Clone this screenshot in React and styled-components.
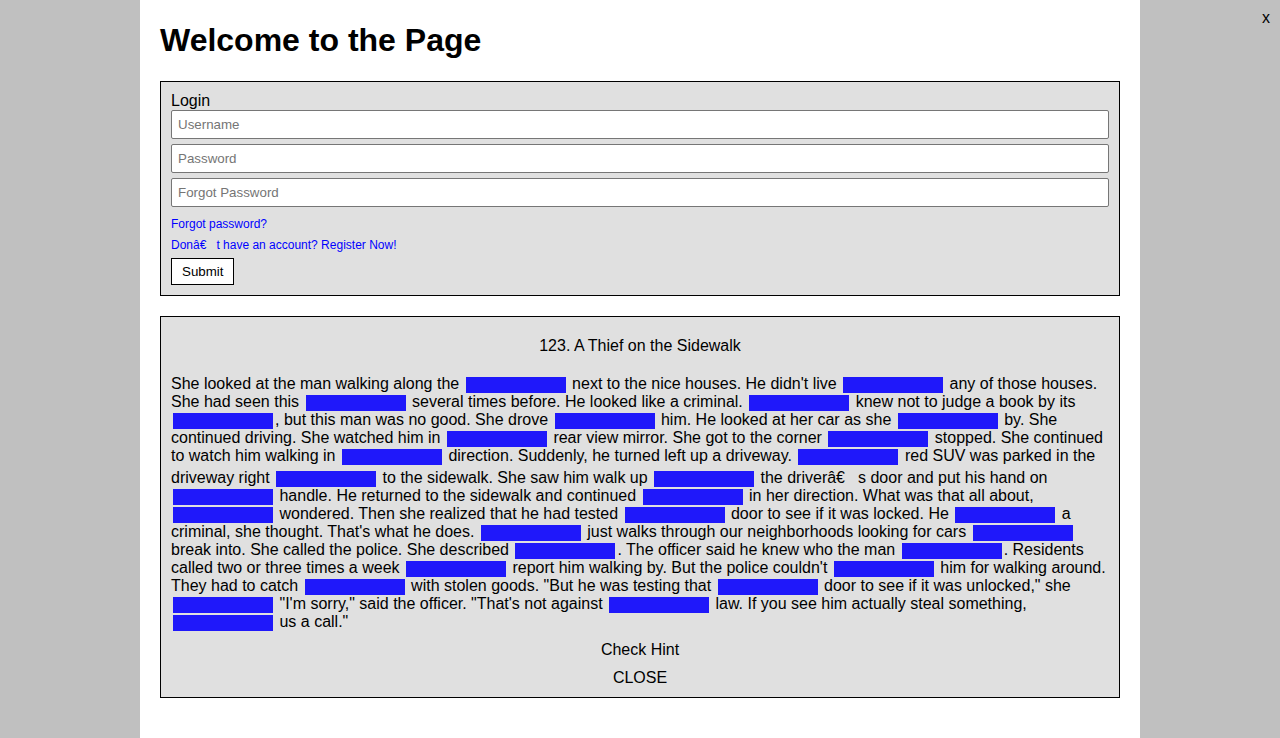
import React from "react";
import styled, { createGlobalStyle } from "styled-components";

const GlobalStyle = createGlobalStyle`
  body {
    margin: 0;
    background: #c0c0c0;
    font-family: "Liberation Sans", Arial, Helvetica, sans-serif;
    color: #000;
  }
`;

const story = [
  "She looked at the man walking along the ___ next to the nice houses. He didn't live ___ any of those houses. She had seen this ___ several times before. He looked like a criminal. ___ knew not to judge a book by its ___, but this man was no good. She drove ___ him. He looked at her car as she ___ by. She continued driving. She watched him in ___ rear view mirror. She got to the corner ___ stopped. She continued to watch him walking in ___ direction. Suddenly, he turned left up a driveway. ___ red SUV was parked in the driveway right ___ to the sidewalk. She saw him walk up ___ the driver\u00e2\u20ac",
  "s door and put his hand on ___ handle. He returned to the sidewalk and continued ___ in her direction. What was that all about, ___ wondered. Then she realized that he had tested ___ door to see if it was locked. He ___ a criminal, she thought. That's what he does. ___ just walks through our neighborhoods looking for cars ___ break into. She called the police. She described ___. The officer said he knew who the man ___. Residents called two or three times a week ___ report him walking by. But the police couldn't ___ him for walking around. They had to catch ___ with stolen goods. \"But he was testing that ___ door to see if it was unlocked,\" she ___ \"I'm sorry,\" said the officer. \"That's not against ___ law. If you see him actually steal something, ___ us a call.\"",
];

function withBlanks(text, keyBase) {
  const parts = text.split("___");
  return parts.map((part, i) => (
    <React.Fragment key={keyBase + i}>
      {part}
      {i < parts.length - 1 && <Blank />}
    </React.Fragment>
  ));
}

function App() {
  return (
    <>
      <GlobalStyle />
      <CloseX>x</CloseX>
      <Panel>
        <Heading>Welcome to the Page</Heading>

        <Box>
          <Label>Login</Label>
          <Field placeholder="Username" />
          <Field placeholder="Password" type="password" />
          <Field placeholder="Forgot Password" />
          <Links>
            <SmallLink href="#">Forgot password?</SmallLink>
            <SmallLink href="#">Don{"\u00e2\u20ac\u0099"}t have an account? Register Now!</SmallLink>
          </Links>
          <SubmitButton>Submit</SubmitButton>
        </Box>

        <Box $gap>
          <StoryTitle>123. A Thief on the Sidewalk</StoryTitle>
          <StoryText>
            {withBlanks(story[0], "a")}
            <Garbled>{"\u0099"}</Garbled>
            {withBlanks(story[1], "b")}
          </StoryText>
          <Action>Check Hint</Action>
          <Action>CLOSE</Action>
        </Box>
      </Panel>
    </>
  );
}

const CloseX = styled.div`
  position: absolute;
  top: 9px;
  right: 10px;
  font-size: 16px;
`;

const Panel = styled.div`
  width: 1000px;
  min-height: 100vh;
  margin: 0 auto;
  padding: 1px 20px 20px;
  box-sizing: border-box;
  background: #fff;
`;

const Heading = styled.h1`
  font-size: 32px;
  font-weight: bold;
  margin: 21px 0 22px;
`;

const Box = styled.div`
  border: 1px solid #000;
  background: #e0e0e0;
  padding: 10px;
  margin-top: ${(p) => (p.$gap ? "20px" : "0")};
`;

const Label = styled.div`
  font-size: 16px;
  line-height: 18px;
`;

const Field = styled.input`
  display: block;
  width: 100%;
  height: 29px;
  box-sizing: border-box;
  margin: 0 0 5px;
  padding: 0 6px;
  border: 1px solid #767676;
  border-radius: 2px;
  background: #fff;
  font-family: inherit;
  font-size: 13.333px;

  &::placeholder {
    color: #757575;
  }
`;

const Links = styled.div`
  display: flex;
  flex-direction: column;
  align-items: flex-start;
  gap: 7px;
  margin-top: 10px;
`;

const SmallLink = styled.a`
  font-size: 12px;
  line-height: 14px;
  color: #0000ff;
  text-decoration: none;
`;

const SubmitButton = styled.button`
  display: block;
  margin-top: 6px;
  height: 27px;
  padding: 0 10px;
  border: 1px solid #000;
  border-radius: 0;
  background: #fff;
  font-family: inherit;
  font-size: 13.333px;
  color: #000;
`;

const StoryTitle = styled.div`
  text-align: center;
  font-size: 16px;
  line-height: 18px;
  margin: 10px 0 20px;
`;

const StoryText = styled.div`
  font-size: 16px;
  line-height: 18px;
`;

const Blank = styled.span`
  display: inline-block;
  width: 100px;
  height: 16px;
  margin: 0 2px;
  background: #1f18fa;
  vertical-align: -4px;
`;

const Garbled = styled.span`
  display: inline-block;
  padding-top: 4px;
`;

const Action = styled.div`
  text-align: center;
  font-size: 16px;
  line-height: 18px;
  margin-top: 10px;
`;

export default App;
